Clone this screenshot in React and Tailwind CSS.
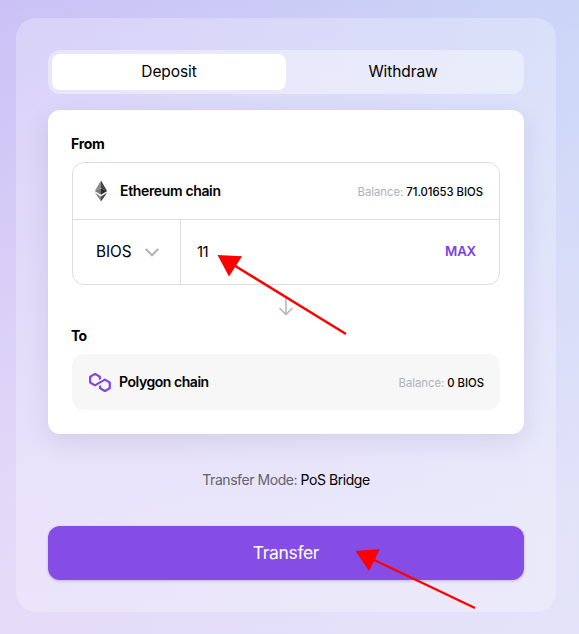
const ETH = (
  <svg width="14" height="22" viewBox="0 0 14 22" className="ml-[21px] shrink-0">
    <path d="M7 .5 .8 11 7 8.2Z" fill="#8a8a8a" />
    <path d="M7 .5 13.2 11 7 8.2Z" fill="#444" />
    <path d="M.8 11 7 8.2V14.8Z" fill="#777" />
    <path d="M13.2 11 7 8.2V14.8Z" fill="#2c2c2c" />
    <path d="M.8 12.6 7 16.4V21.5Z" fill="#8a8a8a" />
    <path d="M13.2 12.6 7 16.4V21.5Z" fill="#444" />
  </svg>
);

const POLYGON = (
  <svg width="22" height="19" viewBox="0 0 38.4 33.5" preserveAspectRatio="none" className="ml-[17px] shrink-0">
    <path
      fill="#8247e5"
      d="M29,10.2c-0.7-0.4-1.6-0.4-2.4,0L21,13.5l-3.8,2.1l-5.5,3.3c-0.7,0.4-1.6,0.4-2.4,0L5,16.3c-0.7-0.4-1.2-1.2-1.2-2.1v-5c0-0.8,0.4-1.6,1.2-2.1l4.3-2.5c0.7-0.4,1.6-0.4,2.4,0L16,7.2c0.7,0.4,1.2,1.2,1.2,2.1v3.3l3.8-2.2V7c0-0.8-0.4-1.6-1.2-2.1l-8-4.7c-0.7-0.4-1.6-0.4-2.4,0L1.2,5C0.4,5.4,0,6.2,0,7v9.4c0,0.8,0.4,1.6,1.2,2.1l8.1,4.7c0.7,0.4,1.6,0.4,2.4,0l5.5-3.2l3.8-2.2l5.5-3.2c0.7-0.4,1.6-0.4,2.4,0l4.3,2.5c0.7,0.4,1.2,1.2,1.2,2.1v5c0,0.8-0.4,1.6-1.2,2.1L29,28.8c-0.7,0.4-1.6,0.4-2.4,0l-4.3-2.5c-0.7-0.4-1.2-1.2-1.2-2.1V21l-3.8,2.2v3.3c0,0.8,0.4,1.6,1.2,2.1l8.1,4.7c0.7,0.4,1.6,0.4,2.4,0l8.1-4.7c0.7-0.4,1.2-1.2,1.2-2.1V17c0-0.8-0.4-1.6-1.2-2.1L29,10.2z"
    />
  </svg>
);

function Tabs() {
  return (
    <div className="flex h-11 rounded-xl bg-white/40 p-1 text-[15.5px] tracking-[-0.1px]">
      <button className="w-[234px] rounded-lg bg-white">Deposit</button>
      <button className="flex-1">Withdraw</button>
    </div>
  );
}

function Balance({ amount }) {
  return (
    <span className="ml-auto pt-0.5 text-[11.3px] tracking-[-0.02px] whitespace-nowrap text-[#aeb1b9]">
      Balance: <span className="font-medium text-black">{amount}</span>
    </span>
  );
}

export default function App() {
  return (
    <div className="relative h-[634px] w-[579px] overflow-hidden bg-[linear-gradient(to_bottom,rgba(245,237,250,0),rgba(245,237,250,0.56)_82%,rgba(245,237,250,0.6)),linear-gradient(to_right,#cbc1f6,#cbd6f7)] pt-[18px] pl-4 font-['Inter',sans-serif] text-black">
      <main className="flex h-[594px] w-[540px] flex-col rounded-[20px] bg-white/25 px-8 pt-8">
        <Tabs />
        <section className="mt-4 flex h-[324px] flex-col rounded-xl bg-white px-6 shadow-[0_8px_24px_rgba(60,40,110,0.10)]">
          <h2 className="mt-6 -ml-px h-5 text-sm leading-5 font-bold tracking-[-0.3px]">From</h2>
          <div className="mt-2 flex h-[123px] shrink-0 flex-col rounded-xl border border-[#dcdde0]">
            <div className="flex h-[57px] items-center border-b border-[#dcdde0] pr-4">
              {ETH}
              <span className="ml-3 text-sm font-semibold tracking-[-0.35px]">Ethereum chain</span>
              <Balance amount="71.01653 BIOS" />
            </div>
            <div className="flex flex-1">
              <div className="flex w-[108px] items-center border-r border-[#dcdde0] pl-[23px]">
                <span className="w-[49px] text-[15.3px]">BIOS</span>
                <svg width="14" height="9" viewBox="0 0 14 9" fill="none" stroke="#b1b3b7" strokeWidth="2">
                  <path d="M.8 1 7 7.3 13.2 1" />
                </svg>
              </div>
              <div className="flex flex-1 items-center justify-between pr-[23px] pl-4">
                <span className="text-[15px] tracking-[-0.5px]">11</span>
                <span className="text-[13.3px] font-semibold tracking-[-0.2px] text-[#7b3fe4]">MAX</span>
              </div>
            </div>
          </div>
          <svg width="16" height="18" viewBox="0 0 16 18" fill="none" stroke="#aeb4bc" strokeWidth="1.5" className="mt-[13px] shrink-0 self-center">
            <path d="M8 0V16.5M1.5 10 8 16.5 14.5 10" />
          </svg>
          <h2 className="mt-[10px] -ml-px h-5 text-sm leading-5 font-bold tracking-[-0.8px]">To</h2>
          <div className="mt-2 flex h-14 shrink-0 items-center rounded-xl bg-[#f7f7f7] pr-4">
            {POLYGON}
            <span className="ml-2 text-sm font-semibold tracking-[-0.45px]">Polygon chain</span>
            <Balance amount="0 BIOS" />
          </div>
        </section>
        <p className="mt-9 text-center text-sm leading-5 tracking-[-0.44px] text-[#61636f]">
          Transfer Mode: <span className="text-black">PoS Bridge</span>
        </p>
        <button className="mt-9 h-[54px] rounded-xl bg-[#854ce6] pt-px text-[17.5px] tracking-[-0.35px] text-white shadow-[0_1px_3px_rgba(60,40,110,0.25)]">
          Transfer
        </button>
      </main>
      <svg width="579" height="634" className="pointer-events-none absolute inset-0" fill="#f00" stroke="#f00">
        <path d="M346 334 232 264M475 608 370 558" strokeWidth="2.4" />
        <path stroke="none" d="M217.500 255 242 256.300 229 276.500ZM355.500 551 380 549 369 571Z" />
      </svg>
    </div>
  );
}
